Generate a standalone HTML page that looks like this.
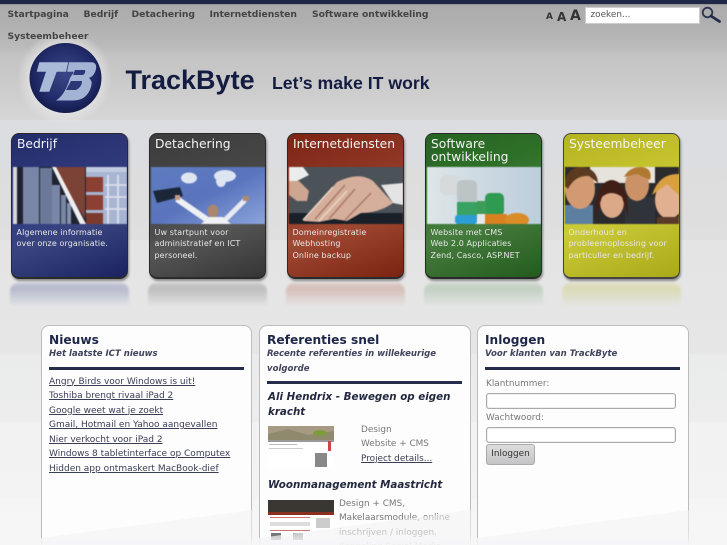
<!DOCTYPE html>
<html><head><meta charset="utf-8"><style>
*{box-sizing:border-box}
html,body{margin:0;padding:0;width:727px;height:545px;overflow:hidden;background:#f6f5f6}
#w{position:absolute;left:0;top:0;width:727px;height:545px;overflow:hidden;font-family:"DejaVu Sans",sans-serif;
background:linear-gradient(180deg,#1e2747 0,#1e2747 4px,#8f9196 4px,#acacac 6px,#b0b0b0 26px,#b6b6b6 38px,#bcbcbc 49px,#c4c4c4 57px,#c8c8c8 76px,#d0d0d0 100px,#d6d6d6 120px,#dcdde0 120px,#dcdde0 168px,#dddddd 168px,#dfdfdf 240px,#e4e4e4 240px,#e6e6e7 354px,#eaeceb 354px,#ecedec 422px,#f2f2f2 422px,#f3f3f3 498px,#f6f5f6 498px,#f7f6f7 545px)}
.a{position:absolute}
.nav{font-weight:bold;font-size:9.2px;color:#444;white-space:nowrap;line-height:12px;z-index:5}
.card{position:absolute;top:133px;width:117px;height:146px;border-radius:8px;border:1px solid #2a2a2a;border-bottom-width:2px;overflow:hidden;box-shadow:1px 2px 2px rgba(0,0,0,.4);color:#eee}
.card .t{position:absolute;left:5px;top:4px;font-size:12.3px;line-height:12.5px;color:#f4f4f4}
.card .i{position:absolute;left:1px;top:33px;width:114px;height:57px;display:block;filter:blur(.4px)}
.card .d{position:absolute;left:4.5px;top:92.5px;font-size:8px;line-height:11.6px;white-space:nowrap;letter-spacing:.1px;color:#e6e6e6}
.ref{position:absolute;top:283px;width:119px;height:24px;border-radius:8px 8px 0 0;opacity:.5;filter:blur(1px)}
.p{position:absolute;top:325px;height:220px;background:#fdfdfe;border:1px solid #bcbcbc;border-bottom:0;border-radius:8px 8px 0 0}
.fade{position:absolute;top:505px;height:40px;clip-path:polygon(0 33px,100% 5px,100% 100%,0 100%);background:linear-gradient(180deg,rgba(243,243,244,.55) 0,rgba(243,243,244,.6) 70%,rgba(246,246,247,.95) 100%)}
h2{position:absolute;margin:0;font-size:12.2px;line-height:16px;font-weight:bold;color:#1e2747;white-space:nowrap}
.s{position:absolute;font-size:8.55px;line-height:14.5px;font-weight:bold;font-style:italic;color:#3f435c}
.hr{position:absolute;height:3px;background:#262c4b}
.l{position:absolute;left:7px;top:48.5px;font-size:9px;line-height:14.5px;color:#3a3e55;white-space:nowrap}
.l a{display:block;color:inherit;text-decoration:underline}
.h3{position:absolute;font-size:10.3px;line-height:14.5px;font-weight:bold;font-style:italic;color:#24283f}
.g{position:absolute;font-size:8.9px;line-height:14.5px;color:#777}
.inp{position:absolute;height:16px;width:190px;background:#fff;border:1px solid #aaa;border-radius:3px;box-shadow:inset 0 0 1px #999}
</style></head><body><div id="w">

<div class="a nav" style="left:7.5px;top:9px">Startpagina</div>
<div class="a nav" style="left:83.5px;top:9px">Bedrijf</div>
<div class="a nav" style="left:131.5px;top:9px">Detachering</div>
<div class="a nav" style="left:209.5px;top:9px">Internetdiensten</div>
<div class="a nav" style="left:312px;top:9px">Software ontwikkeling</div>
<div class="a nav" style="left:7.5px;top:31px">Systeembeheer</div>

<div class="a" style="left:546px;top:12px;font-size:9px;font-weight:bold;color:#333;line-height:11px">A</div>
<div class="a" style="left:557px;top:10px;font-size:12px;font-weight:bold;color:#333;line-height:14px">A</div>
<div class="a" style="left:570px;top:8px;font-size:14px;font-weight:bold;color:#333;line-height:16px">A</div>
<div class="a" style="left:585px;top:7px;width:115px;height:17px;background:#fff;border:1px solid #ccc;font-size:8.9px;line-height:14px;color:#555;padding-left:4.5px">zoeken...</div>
<svg class="a" style="left:700px;top:6px" width="22" height="18" viewBox="0 0 22 18"><circle cx="7.5" cy="6.5" r="4.8" fill="none" stroke="#2b3350" stroke-width="1.8"/><path d="M11 10L19.5 15.5" stroke="#232b4a" stroke-width="2.8" stroke-linecap="round"/></svg>

<!-- logo -->
<div class="a" style="left:17px;top:32px;width:95px;height:92px;border-radius:50%;background:radial-gradient(circle,rgba(232,232,232,.75) 50%,rgba(232,232,232,0) 72%)"></div>
<svg class="a" style="left:29px;top:43px" width="73" height="70" viewBox="0 0 73 70">
<defs><radialGradient id="lg" cx=".5" cy=".45" r=".55"><stop offset="0" stop-color="#3a4686"/><stop offset=".7" stop-color="#222c6a"/><stop offset="1" stop-color="#141c4c"/></radialGradient></defs>
<ellipse cx="36.5" cy="35" rx="36" ry="35" fill="url(#lg)"/>
<path d="M10.3 19.3H39.3L37 28.7H27.7L20.3 48.7H10.3L17 28.7H7.7Z" fill="#a9b9d8"/>
<path d="M40 19.3H63Q68 20 67 26Q65.5 33 60 35Q64 38 62 44Q58 57 45 57.5H27Q36 52 41 35L45 28.7H38Z" fill="#a3b3d3"/>
<path d="M46 27H56Q57 30 54 32H44ZM42 38H53Q53 44 47 47H37Z" fill="#2b3878"/>
</svg>
<div class="a" style="left:125.5px;top:64px;font-family:'Liberation Sans',sans-serif;font-weight:bold;font-size:27px;line-height:32px;color:#141c42;white-space:nowrap">TrackByte</div>
<div class="a" style="left:272px;top:72px;font-family:'Liberation Sans',sans-serif;font-weight:bold;font-size:17.7px;line-height:22px;color:#141c42;white-space:nowrap">Let’s make IT work</div>

<!-- cards -->
<div class="card" style="left:11px;background:linear-gradient(160deg,#232c6a 0,#2c3676 25%,#333e80 50%,#39447f 65%,#1a2360 100%)">
<div class="t">Bedrijf</div>
<svg class="i" viewBox="0 0 114 57" preserveAspectRatio="none"><rect width="114" height="57" fill="#a9b5d4"/><rect x="0" width="74" height="57" fill="#1f2430"/><rect x="0" width="4" height="57" fill="#d8d8dc"/><rect x="10" width="16" height="57" fill="#7a86a8"/><rect x="27" y="1" width="12" height="56" fill="#6c7898"/><rect x="39" y="18" width="8" height="39" fill="#7a86a8"/><rect x="48" y="28" width="5" height="29" fill="#7a86a8"/><rect x="54" y="36" width="4" height="21" fill="#8490b0"/><path d="M40 0H72V52Z" fill="#7d4236"/><path d="M39 0H43L73 57H67Z" fill="#eeeef0"/><path d="M73 0H114V57H73Z" fill="#a8b5d2"/><rect x="73" y="10" width="17" height="15" fill="#8c4032"/><rect x="73" y="28" width="17" height="15" fill="#8c4032"/><rect x="73" y="46" width="17" height="11" fill="#7c3a2c"/><path d="M95 8V57M105 8V57M92 18H114M92 30H114M92 42H114" stroke="#dfe4f0" stroke-width="1.6"/><rect x="73" width="41" height="5" fill="#c2cbe0"/></svg>
<div class="d">Algemene informatie<br>over onze organisatie.</div></div>

<div class="card" style="left:149px;background:linear-gradient(160deg,#3c3c3c 0,#4a4a4a 50%,#565656 65%,#353535 100%)">
<div class="t">Detachering</div>
<svg class="i" viewBox="0 0 114 57" preserveAspectRatio="none"><defs><linearGradient id="sk" x1="0" y1="0" x2="1" y2="1"><stop offset="0" stop-color="#5f7cc0"/><stop offset=".5" stop-color="#5a74bd"/><stop offset="1" stop-color="#8ba4dc"/></linearGradient></defs><rect width="114" height="57" fill="url(#sk)"/><ellipse cx="38" cy="11" rx="8" ry="5.5" fill="#dfe6f2"/><ellipse cx="74" cy="9" rx="11" ry="6" fill="#dde5f2"/><ellipse cx="70" cy="14" rx="5" ry="6" fill="#dde5f2"/><path d="M2 24L29 20L32 29L6 36Z" fill="#1b2638"/><path d="M26 32L58 54" stroke="#eef0f4" stroke-width="6"/><path d="M94 33L74 53" stroke="#e8ebf2" stroke-width="5"/><ellipse cx="62" cy="44" rx="5.5" ry="6.5" fill="#a98672"/><path d="M50 57L58 50H72L80 57Z" fill="#f0f0f4"/><rect x="24" y="28" width="5" height="5" fill="#c49a84"/><rect x="92" y="29" width="6" height="5" fill="#b08a70"/></svg>
<div class="d">Uw startpunt voor<br>administratief en ICT<br>personeel.</div></div>

<div class="card" style="left:287px;background:linear-gradient(160deg,#7e2415 0,#8c3322 30%,#a04a34 60%,#7a2310 100%)">
<div class="t">Internetdiensten</div>
<svg class="i" viewBox="0 0 114 57" preserveAspectRatio="none"><rect width="114" height="57" fill="#4b5258"/><path d="M0 0H14L20 8L8 14H0Z" fill="#ececec"/><path d="M92 18L114 16V38L104 36Z" fill="#e4e4e4"/><rect y="46" width="114" height="11" fill="#1a2028"/><path d="M0 14L10 14L20 24L18 34L8 34L0 28Z" fill="#cda590"/><path d="M14 54L48 15Q70 4 84 14L104 36Q90 46 72 46L58 54L45 52L30 55Z" fill="#d6ae9c"/><path d="M26 52L56 18M40 52L66 22M56 53L82 26" stroke="#a87866" stroke-width="1.4"/><path d="M14 53L44 20M30 54L58 24" stroke="#eed8cc" stroke-width="1.4"/></svg>
<div class="d">Domeinregistratie<br>Webhosting<br>Online backup</div></div>

<div class="card" style="left:425px;background:linear-gradient(160deg,#256322 0,#2f7029 30%,#467d3e 60%,#235b1e 100%)">
<div class="t">Software<br>ontwikkeling</div>
<svg class="i" viewBox="0 0 114 57" preserveAspectRatio="none"><defs><linearGradient id="sw" x1="0" y1="0" x2="1" y2="0"><stop offset="0" stop-color="#dde6e8"/><stop offset="1" stop-color="#bccddc"/></linearGradient></defs><rect width="114" height="57" fill="url(#sw)"/><rect x="13" y="8" width="19" height="20" rx="6" fill="#d6dadb"/><rect x="30" y="13" width="20" height="24" rx="5" fill="#bcc4c6"/><rect x="30" y="35" width="20" height="15" fill="#38a262"/><rect x="58" y="26" width="19" height="23" rx="5" fill="#2f9a52"/><rect x="50" y="34" width="9" height="13" fill="#3c9c58"/><rect x="28" y="48" width="22" height="9" rx="3" fill="#2d9ed4"/><rect x="58" y="47" width="22" height="10" fill="#d98020"/><ellipse cx="90" cy="53" rx="12" ry="7" fill="#d98c28"/><rect x="50" y="47" width="8" height="10" fill="#e6e8ec"/></svg>
<div class="d">Website met CMS<br>Web 2.0 Applicaties<br>Zend, Casco, ASP.NET</div></div>

<div class="card" style="left:563px;background:linear-gradient(160deg,#b5b421 0,#c2c12c 30%,#cbca38 55%,#a9a919 100%);border-color:#444">
<div class="t">Systeembeheer</div>
<svg class="i" viewBox="0 0 114 57" preserveAspectRatio="none"><rect width="114" height="57" fill="#2b2a2c"/><rect x="25" width="65" height="16" fill="#e6e2dc"/><rect y="38" width="28" height="19" fill="#5c7ea0"/><rect x="60" y="30" width="30" height="27" fill="#30343a"/><ellipse cx="15" cy="22" rx="15" ry="20" fill="#d29a72"/><path d="M-1 18Q2 -1 18 0Q32 2 33 16L24 9Q10 8 3 22Z" fill="#5c3a20"/><ellipse cx="47" cy="35" rx="12" ry="16" fill="#dba888"/><path d="M30 52Q30 14 47 13Q64 15 63 50L57 30Q46 22 37 30Z" fill="#3f1f18"/><ellipse cx="72" cy="18" rx="12" ry="16" fill="#cb9268"/><path d="M59 10Q64 0 76 0Q88 1 85 13L72 7Z" fill="#b07830"/><ellipse cx="104" cy="33" rx="14" ry="19" fill="#e0b090"/><path d="M87 28Q94 6 114 7V28L102 17Z" fill="#d8a040"/><rect x="92" y="50" width="22" height="7" fill="#5a3a28"/></svg>
<div class="d">Onderhoud en<br>probleemoplossing voor<br>particulier en bedrijf.</div></div>

<!-- reflections -->
<div class="ref" style="left:10px;background:linear-gradient(180deg,#a0a6c4 0,#8c93b6 25%,#e6e7ea 100%)"></div>
<div class="ref" style="left:148px;background:linear-gradient(180deg,#aaa 0,#9a9a9a 25%,#e6e6e7 100%)"></div>
<div class="ref" style="left:286px;background:linear-gradient(180deg,#d2b0a6 0,#c99c90 25%,#e6e6e7 100%)"></div>
<div class="ref" style="left:424px;background:linear-gradient(180deg,#b5c9b2 0,#a5bda2 25%,#e6e6e7 100%)"></div>
<div class="ref" style="left:562px;background:linear-gradient(180deg,#dada9c 0,#d2d28c 25%,#e6e6e7 100%)"></div>

<!-- panels -->
<div class="p" style="left:41px;width:211px">
<h2 style="left:7px;top:6px">Nieuws</h2>
<div class="s" style="left:7px;top:21px;white-space:nowrap">Het laatste ICT nieuws</div>
<div class="hr" style="left:7px;top:41px;width:195px"></div>
<div class="l"><a>Angry Birds voor Windows is uit!</a><a>Toshiba brengt rivaal iPad 2</a><a>Google weet wat je zoekt</a><a>Gmail, Hotmail en Yahoo aangevallen</a><a>Nier verkocht voor iPad 2</a><a>Windows 8 tabletinterface op Computex</a><a>Hidden app ontmaskert MacBook-dief</a></div>
</div>

<div class="p" style="left:259px;width:212px">
<h2 style="left:7px;top:6px">Referenties snel</h2>
<div class="s" style="left:7px;top:21px;width:200px">Recente referenties in willekeurige volgorde</div>
<div class="hr" style="left:7px;top:55px;width:195px"></div>
<div class="h3" style="left:8px;top:64px;width:190px">Ali Hendrix - Bewegen op eigen kracht</div>
<svg class="a" style="left:8px;top:100px" width="66" height="41" viewBox="0 0 66 41"><rect width="66" height="41" fill="#fff"/><rect width="66" height="14" fill="#a69a84"/><path d="M0 8L20 3L40 9L66 5V14H0Z" fill="#8f8a6e"/><ellipse cx="52" cy="7" rx="7" ry="3" fill="#7e9c3c"/><rect y="14" width="66" height="2" fill="#999"/><rect x="1" y="18" width="28" height="1" fill="#bbb"/><rect x="1" y="22" width="34" height="1" fill="#ccc"/><rect x="47" y="27" width="12" height="14" fill="#888"/><rect x="60" y="15" width="3" height="10" fill="#c44"/></svg>
<div class="g" style="left:101px;top:96.5px">Design<br>Website + CMS<br><span style="color:#3a3e55;text-decoration:underline">Project details...</span></div>
<div class="h3" style="left:8px;top:152px;white-space:nowrap">Woonmanagement Maastricht</div>
<svg class="a" style="left:8px;top:174px" width="66" height="40" viewBox="0 0 66 40"><rect width="66" height="40" fill="#fff"/><rect width="66" height="13" fill="#3a3632"/><rect y="12" width="66" height="3" fill="#8a3020"/><rect x="2" y="17" width="40" height="1" fill="#c77"/><rect x="2" y="22" width="40" height="4" fill="#ddd"/><rect x="2" y="30" width="40" height="1" fill="#c77"/><rect x="3" y="33" width="10" height="7" fill="#777"/><rect x="25" y="33" width="10" height="7" fill="#888"/><rect x="48" y="18" width="14" height="10" fill="#ccc"/></svg>
<div class="g" style="left:79px;top:170.5px;width:125px">Design + CMS, Makelaarsmodule, online inschrijven / inloggen. Koppeling Social Media</div>
</div>

<div class="p" style="left:477px;width:212px">
<h2 style="left:7px;top:6px">Inloggen</h2>
<div class="s" style="left:7px;top:21px;white-space:nowrap">Voor klanten van TrackByte</div>
<div class="hr" style="left:7px;top:41px;width:195px"></div>
<div class="g" style="left:8px;top:51px">Klantnummer:</div>
<div class="inp" style="left:8px;top:67px"></div>
<div class="g" style="left:8px;top:85px">Wachtwoord:</div>
<div class="inp" style="left:8px;top:101px"></div>
<div class="a" style="left:8px;top:118px;width:49px;height:21px;border:1px solid #aaa;border-radius:3px;background:linear-gradient(180deg,#ddd,#c4c4c6);font-size:8.9px;line-height:19px;text-align:center;color:#333">Inloggen</div>
</div>

<div class="fade" style="left:41px;width:212px"></div>
<div class="fade" style="left:259px;width:212px"></div>
<div class="fade" style="left:477px;width:212px"></div>
</div></body></html>
